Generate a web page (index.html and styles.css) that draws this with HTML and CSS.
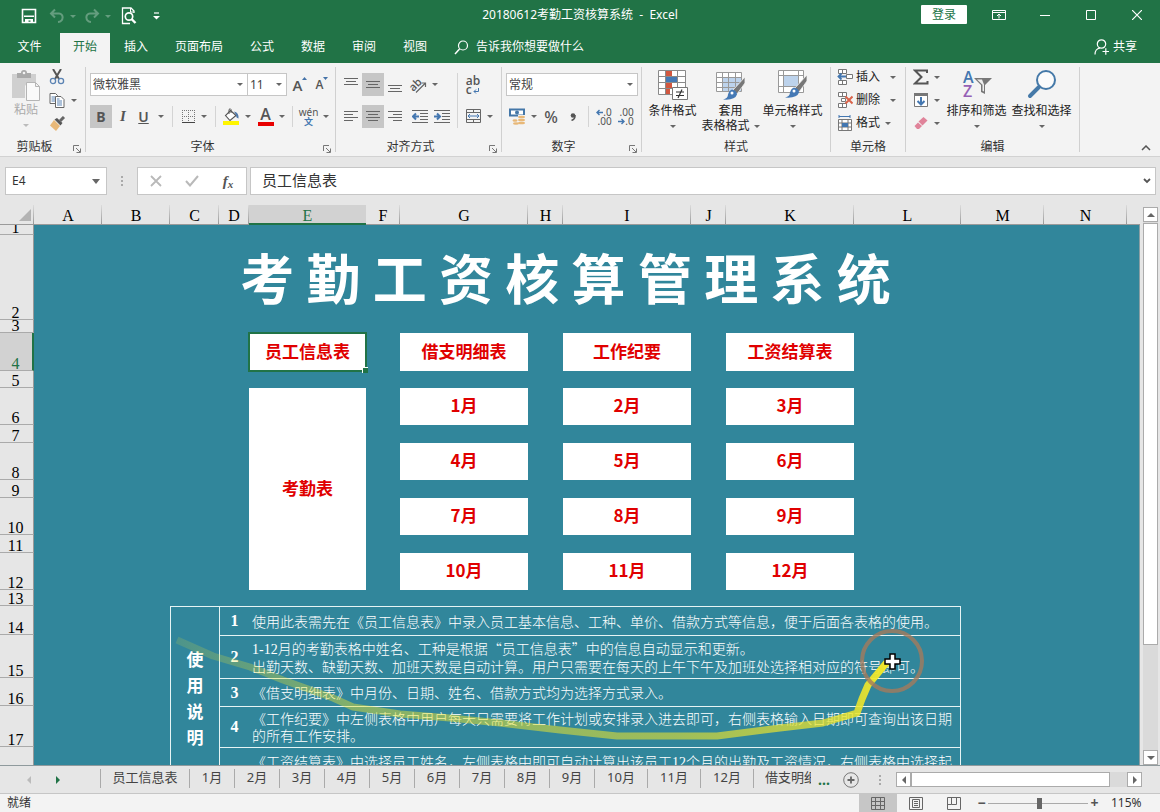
FILE: index.html
```html
<!DOCTYPE html>
<html lang="zh-CN">
<head>
<meta charset="utf-8">
<title>20180612考勤工资核算系统 - Excel</title>
<link rel="stylesheet" href="styles.css">
</head>
<body>
<div class="app">
  <header class="titlebar">
    <div class="quick">
      <button class="qbtn q-save" aria-label="保存"><svg width="16" height="16" viewBox="0 0 16 16"><path d="M1.500 1.500h13v13h-13z" fill="none" stroke="#fff" stroke-width="1.600"/><path d="M3 7.500h10v1.500H3zM4 11h8v4H9.500v-2.500H7.500V15H4z" fill="#fff"/></svg></button>
      <button class="qbtn q-dim" aria-label="撤消"><svg width="16" height="16" viewBox="0 0 16 16"><path d="M6 1.500L2 5.500l4 4M2.500 5.500H10c5 0 5 8-1 8.500" fill="none" stroke="#fff" stroke-width="2"/></svg><i class="caret"></i></button>
      <button class="qbtn q-dim" aria-label="恢复"><svg width="16" height="16" viewBox="0 0 16 16"><path d="M10 1.500l4 4-4 4M13.500 5.500H6c-5 0-5 8 1 8.500" fill="none" stroke="#fff" stroke-width="2"/></svg><i class="caret"></i></button>
      <button class="qbtn q-view" aria-label="打印预览"><svg width="16" height="18" viewBox="0 0 16 18"><path d="M13 6V4L10 1H1.500v15.500H9" fill="none" stroke="#fff" stroke-width="1.300"/><path d="M9.500 1v4H13" fill="none" stroke="#fff"/><circle cx="8" cy="9.500" r="3.700" fill="none" stroke="#fff" stroke-width="1.700"/><path d="M10.500 12l4 4" stroke="#fff" stroke-width="2.400"/></svg></button>
      <button class="qbtn q-more" aria-label="自定义快速访问工具栏"><svg width="7" height="8" viewBox="0 0 7 8"><path d="M1 1h5" stroke="#fff" stroke-width="1.200"/><path d="M0 4h7L3.500 7.500z" fill="#fff"/></svg></button>
    </div>
    <h1 class="doc-title">20180612考勤工资核算系统&nbsp; -&nbsp; Excel</h1>
    <div class="window-tools">
      <button class="login">登录</button>
      <button class="wbtn" aria-label="功能区显示选项"><svg width="14" height="12" viewBox="0 0 14 12"><path d="M.5 1.500h13v9H.500zM.500 3.500h13M7 9.500V5.500M5 7l2-2 2 2" fill="none" stroke="#fff"/></svg></button>
      <button class="wbtn" aria-label="最小化"><svg width="10" height="10" viewBox="0 0 10 10"><path d="M0 5.500h10" stroke="#fff"/></svg></button>
      <button class="wbtn" aria-label="最大化"><svg width="10" height="10" viewBox="0 0 10 10"><path d="M.5.500h9v9h-9z" fill="none" stroke="#fff"/></svg></button>
      <button class="wbtn" aria-label="关闭"><svg width="10" height="10" viewBox="0 0 10 10"><path d="M0 0l10 10M10 0L0 10" stroke="#fff" stroke-width="1.200"/></svg></button>
    </div>
  </header>

  <nav class="tabs">
    <button class="tab file">文件</button>
    <button class="tab active">开始</button>
    <button class="tab">插入</button>
    <button class="tab">页面布局</button>
    <button class="tab">公式</button>
    <button class="tab">数据</button>
    <button class="tab">审阅</button>
    <button class="tab">视图</button>
    <button class="tell"><svg width="15" height="15" viewBox="0 0 15 15"><circle cx="9" cy="5.500" r="4.500" fill="none" stroke="#fff" stroke-width="1.200"/><path d="M5.500 9L1 14" stroke="#fff" stroke-width="1.500"/></svg>告诉我你想要做什么</button>
    <button class="share"><svg width="16" height="16" viewBox="0 0 16 16"><circle cx="7.500" cy="5" r="4.200" fill="none" stroke="#fff" stroke-width="1.200"/><path d="M1 15.500c0-4 2-6 5-6.500M8.500 12.500h6.500M11.800 9.300v6.500" fill="none" stroke="#fff" stroke-width="1.200"/></svg>共享</button>
  </nav>

  <section class="ribbon">
    <div class="group g-clip">
      <div class="body">
        <button class="paste"><svg width="30" height="32" viewBox="0 0 30 32"><path d="M1 4h24v9h-9l-2 3v12H1z" fill="#cfcfcf"/><path d="M6 3h4a3 3 0 0 1 6 0h4v5H6z" fill="#a9a9a9"/><circle cx="13" cy="3" r="1.300" fill="#f3f3f3"/><path d="M15.500 12.500h9l4 4v14h-13zM24.500 12.500v4h4" fill="#fafafa" stroke="#b5b5b5"/></svg>粘贴<i class="caret"></i></button>
        <div class="clip-tools">
          <button class="icon" aria-label="剪切"><svg width="16" height="16" viewBox="0 0 16 16"><path d="M4 0l6 10M12 0L6 10" stroke="#555" stroke-width="2"/><circle cx="4" cy="12" r="2.600" fill="none" stroke="#5b83b3" stroke-width="1.300"/><circle cx="12" cy="12" r="2.600" fill="none" stroke="#5b83b3" stroke-width="1.300"/></svg></button>
          <button class="icon" aria-label="复制"><svg width="16" height="15" viewBox="0 0 16 15"><path d="M1 .500h5.500l2 2v8H1z" fill="#fff" stroke="#666"/><path d="M2.500 4h4M2.500 6h4M2.500 8h4" stroke="#5b83b3"/><path d="M6.500 3.500h5.500l3 3v8H6.500z" fill="#fff" stroke="#666"/><path d="M8 8h5M8 10h5M8 12h5M8 6h2.500" stroke="#5b83b3"/></svg><i class="caret"></i></button>
          <button class="icon" aria-label="格式刷"><svg width="17" height="15" viewBox="0 0 17 15"><path d="M5 4l6 6-4 5L1 9.500z" fill="#e8b878"/><path d="M5.500 3.500L11.500 9.500l2-2.500L8 2z" fill="#555"/><path d="M11 5l4-4" stroke="#666" stroke-width="3"/></svg></button>
        </div>
      </div>
      <div class="label"><span>剪贴板</span><button class="launch" aria-label="剪贴板选项"><svg width="8" height="8" viewBox="0 0 8 8"><path d="M.5 6V.500H6M3 3l4 4M7.500 3.500v4h-4" fill="none" stroke="#777"/></svg></button></div>
    </div>

    <div class="group g-font">
      <div class="body rows">
        <div class="row top">
          <label class="combo fontname"><select aria-label="字体"><option>微软雅黑</option></select><i class="caret"></i></label><label class="combo fontsize"><select aria-label="字号"><option>11</option></select><i class="caret"></i></label>
          <button class="icon grow-a" aria-label="增大字号"><span>A</span><svg width="5" height="3" viewBox="0 0 5 3"><path d="M0 3h5L2.500 0z" fill="#4472a8"/></svg></button>
          <button class="icon shrink-a" aria-label="减小字号"><span>A</span><svg width="5" height="3" viewBox="0 0 5 3"><path d="M0 0h5L2.500 3z" fill="#4472a8"/></svg></button>
        </div>
        <div class="row">
          <button class="icon w22 on fb">B</button><button class="icon w22 fi">I</button><button class="icon w34 fu"><u>U</u><i class="caret"></i></button>
          <span class="sep"></span>
          <button class="icon w34" aria-label="边框"><svg width="14" height="14" viewBox="0 0 14 14"><path d="M.5 0v13M6.500 0v13M12.500 0v13M0 .500h13M0 6.500h13" stroke="#777" stroke-dasharray="1 1"/><path d="M0 12.500h13" stroke="#444"/></svg><i class="caret"></i></button>
          <span class="sep"></span>
          <button class="icon w34" aria-label="填充颜色"><svg width="17" height="17" viewBox="0 0 17 17"><path d="M7.500 2.500l5.500 5-6 5-4.500-5z" fill="#fff" stroke="#555" stroke-width="1.100"/><path d="M6 6V1.500q1.500-1.500 2 0V5" fill="none" stroke="#555"/><path d="M11 3.500q5 1 4.500 7-2.500-.500-2.500-3.500z" fill="#5079ab"/><path d="M0 13h16v4H0z" fill="#fff500"/></svg><i class="caret"></i></button>
          <button class="icon w34" aria-label="字体颜色"><span class="fontcolor">A</span><i class="caret"></i></button>
          <span class="sep"></span>
          <button class="icon w34" aria-label="拼音指南"><span class="pinyin">wén<b>文</b></span><i class="caret"></i></button>
        </div>
      </div>
      <div class="label"><span>字体</span><button class="launch" aria-label="字体选项"><svg width="8" height="8" viewBox="0 0 8 8"><path d="M.5 6V.500H6M3 3l4 4M7.500 3.500v4h-4" fill="none" stroke="#777"/></svg></button></div>
    </div>

    <div class="group g-align">
      <div class="body split">
        <div class="rows">
          <div class="row top">
            <button class="icon w22" aria-label="顶端对齐"><svg width="14" height="14" viewBox="0 0 14 14"><path d="M0 .500h14M2 3.500h10M0 6.500h14" stroke="#666"/></svg></button><button class="icon w22 on" aria-label="垂直居中"><svg width="14" height="14" viewBox="0 0 14 14"><path d="M0 3.500h14M2 6.500h10M0 9.500h14" stroke="#666"/></svg></button><button class="icon w22" aria-label="底端对齐"><svg width="14" height="14" viewBox="0 0 14 14"><path d="M0 7.500h14M2 10.500h10M0 13.500h14" stroke="#666"/></svg></button>
            <button class="icon w34" aria-label="方向"><svg width="18" height="18" viewBox="0 0 18 18"><text x="0" y="12" font-size="11" font-weight="600" font-family="Open Sans" fill="#555" transform="rotate(-45 7 9)">ab</text><path d="M7 16.500l9-9M12.500 7H16.500V11" fill="none" stroke="#666" stroke-width="1.200"/></svg><i class="caret"></i></button>
          </div>
          <div class="row">
            <button class="icon w22" aria-label="左对齐"><svg width="14" height="14" viewBox="0 0 14 14"><path d="M0 1.500h14M0 4.500h9M0 7.500h14M0 10.500h9" stroke="#666"/></svg></button><button class="icon w22 on" aria-label="居中"><svg width="14" height="14" viewBox="0 0 14 14"><path d="M0 1.500h14M2 4.500h10M0 7.500h14M2 10.500h10" stroke="#666"/></svg></button><button class="icon w22" aria-label="右对齐"><svg width="14" height="14" viewBox="0 0 14 14"><path d="M0 1.500h14M5 4.500h9M0 7.500h14M5 10.500h9" stroke="#666"/></svg></button>
            <button class="icon w22 indent" aria-label="减少缩进量"><svg width="16" height="13" viewBox="0 0 16 13"><path d="M0 .500h16M8 3.500h8M8 6.500h8M8 9.500h8M0 12.500h16" stroke="#666"/><path d="M7 6.500H1M4 3.500l-3 3 3 3" fill="none" stroke="#4477b0" stroke-width="2"/></svg></button><button class="icon w22" aria-label="增加缩进量"><svg width="16" height="13" viewBox="0 0 16 13"><path d="M0 .500h16M8 3.500h8M8 6.500h8M8 9.500h8M0 12.500h16" stroke="#666"/><path d="M0 6.500h6M3 3.500l3 3-3 3" fill="none" stroke="#4477b0" stroke-width="2"/></svg></button>
          </div>
        </div>
        <span class="sep tall"></span>
        <div class="rows">
          <div class="row top"><button class="icon w22" aria-label="自动换行"><span class="wrap-ab">ab<br>c<svg width="6" height="6" viewBox="0 0 6 6"><path d="M5.500 0v3.500H1M3 1.500l-2 2 2 2" fill="none" stroke="#4477b0"/></svg></span></button></div>
          <div class="row"><button class="icon w34" aria-label="合并后居中"><svg width="16" height="15" viewBox="0 0 16 15"><path d="M.5.500h14v13H.500zM.500 3.500h14M.500 10.500h14M7.500.500v3M7.500 10.500v3" fill="none" stroke="#666"/><path d="M2 7h11M4 5L2 7l2 2M11 5l2 2-2 2" fill="none" stroke="#4477b0"/></svg><i class="caret"></i></button></div>
        </div>
      </div>
      <div class="label"><span>对齐方式</span><button class="launch" aria-label="对齐选项"><svg width="8" height="8" viewBox="0 0 8 8"><path d="M.5 6V.500H6M3 3l4 4M7.500 3.500v4h-4" fill="none" stroke="#777"/></svg></button></div>
    </div>

    <div class="group g-num">
      <div class="body rows">
        <div class="row top"><label class="combo numfmt"><select aria-label="数字格式"><option>常规</option></select><i class="caret"></i></label></div>
        <div class="row">
          <button class="icon w34" aria-label="会计数字格式"><svg width="17" height="17" viewBox="0 0 17 17"><path d="M1 1.500h14v6H1z" fill="#fff" stroke="#4477a8" stroke-width="2"/><circle cx="8" cy="4.500" r="2" fill="#4477a8"/><path d="M9 7h8v10H4v-6h5z" fill="#f3f3f3"/><ellipse cx="12.500" cy="9" rx="3.500" ry="1.300" fill="#e8b878"/><ellipse cx="12.500" cy="12" rx="3.500" ry="1.300" fill="#e8b878"/><ellipse cx="12.500" cy="15" rx="3.500" ry="1.300" fill="#e8b878"/><ellipse cx="6" cy="12.500" rx="2.500" ry="1.200" fill="#e8b878"/><ellipse cx="7" cy="15.500" rx="3" ry="1.200" fill="#e8b878"/></svg><i class="caret"></i></button>
          <button class="icon w22 pct">%</button><button class="icon w22" aria-label="千位分隔"><svg width="6" height="8" viewBox="0 0 6 8"><circle cx="3" cy="2.500" r="2.300" fill="#555"/><path d="M5 2q.500 4-3.500 5.500" fill="none" stroke="#555" stroke-width="1.400"/></svg></button>
          <span class="sep"></span>
          <button class="icon w22 dec"><span><svg width="7" height="7" viewBox="0 0 7 7"><path d="M7 3.500H1M3.500 1L1 3.500 3.500 6" fill="none" stroke="#4477b0" stroke-width="1.400"/></svg>.0<br>.00</span></button><button class="icon w22 dec"><span>.00<br><svg width="7" height="7" viewBox="0 0 7 7"><path d="M0 3.500h6M3.500 1L6 3.500 3.500 6" fill="none" stroke="#4477b0" stroke-width="1.400"/></svg>.0</span></button>
        </div>
      </div>
      <div class="label"><span>数字</span><button class="launch" aria-label="数字选项"><svg width="8" height="8" viewBox="0 0 8 8"><path d="M.5 6V.500H6M3 3l4 4M7.500 3.500v4h-4" fill="none" stroke="#777"/></svg></button></div>
    </div>

    <div class="group g-style">
      <div class="body">
        <button class="big"><svg width="32" height="32" viewBox="0 0 32 32"><path d="M1.500 1.500h27v24h-27z" fill="#fff"/><path d="M9 1h6v6H9zM9 13h6v6H9zM9 19h4v6H9z" fill="#d2573f"/><path d="M9 7h11v6H9z" fill="#4579b5"/><path d="M1.500 1.500h27v24h-27zM1.500 7.500h27M1.500 13.500h27M1.500 19.500h27M8.500 1.500v24M20.500 1.500v24" fill="none" stroke="#8a8a8a"/><path d="M15.500 18.500h15v12h-15z" fill="#fff" stroke="#777"/><path d="M19 23h8M19 26.500h8M25 20.500l-4 8.500" stroke="#333" stroke-width="1.200"/></svg><span>条件格式</span><i class="caret"></i></button>
        <button class="big mid"><svg width="32" height="32" viewBox="0 0 32 32"><path d="M1.500 3.500h25v19h-25z" fill="#fff"/><path d="M8 9h18v14H8z" fill="#bdd3ec"/><path d="M1.500 3.500h25v19h-25zM1.500 8.500h25M1.500 13.500h25M1.500 18.500h25M7.500 3.500v19M13.500 3.500v19M20.500 3.500v19" fill="none" stroke="#999"/><path d="M30 8L18 21l4 4 8-11z" fill="#777" stroke="#f3f3f3" stroke-width=".800"/><path d="M17 20.500q5 1 5 5-2 6-14 5 5-1 5-5 1-4 4-5z" fill="#4579b5"/><circle cx="17" cy="24" r="1.500" fill="#fff"/></svg><span>套用</span><span class="line2">表格格式<i class="caret"></i></span></button>
        <button class="big wide"><svg width="32" height="32" viewBox="0 0 32 32"><path d="M1.500 1.500h25v22h-25z" fill="#fff"/><path d="M7 7h14v10H7z" fill="#bdd3ec"/><path d="M1.500 1.500h25v22h-25zM1.500 6.500h25M1.500 17.500h25M6.500 1.500v22M21.500 1.500v22" fill="none" stroke="#999"/><path d="M30 6L18 19l4 4 8-11z" fill="#777" stroke="#f3f3f3" stroke-width=".800"/><path d="M17 18.500q5 1 5 5-2 6-14 5 5-1 5-5 1-4 4-5z" fill="#4579b5"/><circle cx="17" cy="22" r="1.500" fill="#fff"/></svg><span>单元格样式</span><i class="caret"></i></button>
      </div>
      <div class="label"><span>样式</span></div>
    </div>

    <div class="group g-cells">
      <div class="body list">
        <button class="line"><svg width="16" height="16" viewBox="0 0 16 16"><path d="M1.500.500h8v4h-8zM5.500.500v4M1.500 11.500h8v4h-8zM5.500 11.500v4M9.500 5.500h6v4h-6z" fill="#fff" stroke="#777"/><path d="M9 7.500H1M4.500 4.500l-3 3 3 3" fill="none" stroke="#4477b0" stroke-width="1.800"/></svg><span>插入</span><i class="caret far"></i></button>
        <button class="line"><svg width="16" height="16" viewBox="0 0 16 16"><path d="M1.500.500h8v4h-8zM5.500.500v4M1.500 11.500h8v4h-8zM5.500 11.500v4M4.500 6.500h4v3h-4z" fill="#fff" stroke="#777"/><path d="M8.500 4.500l7 7M15.500 4.500l-7 7" stroke="#d9634a" stroke-width="2"/></svg><span>删除</span><i class="caret far"></i></button>
        <button class="line"><svg width="16" height="16" viewBox="0 0 16 16"><path d="M2 1.500h11M2 0v3M13 0v3" stroke="#4477b0"/><path d="M1.500 4.500h13v11h-13zM1.500 8h13M1.500 12h13M5 4.500v11M11 4.500v11" fill="#fff" stroke="#777"/><path d="M5 8h6v4H5z" fill="#4477b0"/></svg><span>格式</span><i class="caret"></i></button>
      </div>
      <div class="label"><span>单元格</span></div>
    </div>

    <div class="group g-edit">
      <div class="body">
        <div class="list">
          <button class="line" aria-label="自动求和"><svg width="16" height="16" viewBox="0 0 16 16"><path d="M14 4V1.500H2L8.500 8 2 14.500h12.500V12" fill="none" stroke="#555" stroke-width="2"/></svg><i class="caret"></i></button>
          <button class="line" aria-label="填充"><svg width="16" height="16" viewBox="0 0 16 16"><path d="M1.500 1.500h13v13h-13z" fill="#fff" stroke="#777"/><path d="M1 1h14v3H1z" fill="#777"/><path d="M8 5v7M4.500 9L8 12.500 11.500 9" fill="none" stroke="#4477b0" stroke-width="2"/></svg><i class="caret"></i></button>
          <button class="line" aria-label="清除"><svg width="16" height="16" viewBox="0 0 16 16"><path d="M10.500 2l4 3.500-5 5-4-4z" fill="#e0839a"/><path d="M5 7.500l4 3.500-3 3H4l-2.500-3z" fill="#e0839a"/></svg><i class="caret"></i></button>
        </div>
        <button class="big wide sort"><svg width="32" height="32" viewBox="0 0 32 32"><text x="2" y="14" font-size="16" font-weight="600" font-family="Open Sans" fill="#4477b0">A</text><text x="2" y="28" font-size="16" font-weight="600" font-family="Open Sans" fill="#9560b5">Z</text><path d="M13 9h18l-7 7v9l-4-2v-7z" fill="#777"/><path d="M16 10.500h5l2 5v7l-1.500-.700v-6z" fill="#eee"/></svg><span>排序和筛选</span><i class="caret"></i></button>
        <button class="big wide"><svg width="32" height="32" viewBox="0 0 32 32"><circle cx="20" cy="11" r="9" fill="#fbfbfb" stroke="#4579a8" stroke-width="2"/><path d="M13 18L4 27" stroke="#4579a8" stroke-width="4" stroke-linecap="round"/></svg><span>查找和选择</span><i class="caret"></i></button>
      </div>
      <div class="label"><span>编辑</span></div>
    </div>
    <button class="collapse" aria-label="折叠功能区"><svg width="10" height="6" viewBox="0 0 10 6"><path d="M1 5l4-4 4 4" fill="none" stroke="#555" stroke-width="1.500"/></svg></button>
  </section>

  <section class="formula">
    <div class="namebox"><input type="text" value="E4" aria-label="名称框"><button aria-label="名称列表"><i class="caret big-caret"></i></button></div>
    <span class="dots"></span>
    <div class="fx">
      <button aria-label="取消"><svg width="12" height="12" viewBox="0 0 12 12"><path d="M1 1l10 10M11 1L1 11" stroke="#b9b9b9" stroke-width="1.800"/></svg></button>
      <button aria-label="输入"><svg width="14" height="12" viewBox="0 0 14 12"><path d="M1 6l4 4.500L13 1" fill="none" stroke="#b9b9b9" stroke-width="2"/></svg></button>
      <button class="fx-btn">f<sub>x</sub></button>
    </div>
    <div class="fbar"><input type="text" value="员工信息表" aria-label="编辑栏"><button aria-label="展开编辑栏"><svg width="8" height="6" viewBox="0 0 8 6"><path d="M1 1l3 3 3-3" fill="none" stroke="#555" stroke-width="1.800"/></svg></button></div>
  </section>

  <main class="work">
    <div class="sheet">
      <table class="grid">
        <colgroup><col class="c-head"><col class="c-a"><col class="c-a"><col class="c-c"><col class="c-d"><col class="c-e"><col class="c-gap"><col class="c-g"><col class="c-gap2"><col class="c-g"><col class="c-gap2"><col class="c-g"><col class="c-l"><col class="c-m"><col class="c-m"><col></colgroup>
        <thead><tr><th class="corner"><svg width="12" height="12" viewBox="0 0 12 12"><path d="M12 0v12H0z" fill="#b3b3b3"/></svg></th><th>A</th><th>B</th><th>C</th><th>D</th><th class="sel">E</th><th>F</th><th>G</th><th>H</th><th>I</th><th>J</th><th>K</th><th>L</th><th>M</th><th>N</th><th class="last"></th></tr></thead>
        <tbody>
          <tr class="r1"><th><span class="cut">1</span></th><td colspan="15"></td></tr>
          <tr class="r2"><th>2</th><td colspan="2"></td><td colspan="10" class="title">考 勤 工 资 核 算 管 理 系 统</td><td colspan="3"></td></tr>
          <tr class="r3"><th>3</th><td colspan="15"></td></tr>
          <tr class="r4"><th class="sel">4</th><td colspan="4"></td><td class="box current"><a href="#info">员工信息表</a><i class="handle"></i></td><td></td><td class="box"><a href="#loan">借支明细表</a></td><td></td><td class="box"><a href="#memo">工作纪要</a></td><td></td><td class="box"><a href="#pay">工资结算表</a></td><td colspan="4"></td></tr>
          <tr class="gap"><th>5</th><td colspan="15"></td></tr>
          <tr class="rb"><th>6</th><td colspan="4"></td><td rowspan="7" class="box"><a href="#attend">考勤表</a></td><td></td><td class="box"><a href="#m1">1月</a></td><td></td><td class="box"><a href="#m2">2月</a></td><td></td><td class="box"><a href="#m3">3月</a></td><td colspan="4"></td></tr>
          <tr class="gap g2"><th>7</th><td colspan="4"></td><td colspan="10"></td></tr>
          <tr class="rb"><th>8</th><td colspan="4"></td><td></td><td class="box"><a href="#m4">4月</a></td><td></td><td class="box"><a href="#m5">5月</a></td><td></td><td class="box"><a href="#m6">6月</a></td><td colspan="4"></td></tr>
          <tr class="gap g2"><th>9</th><td colspan="4"></td><td colspan="10"></td></tr>
          <tr class="rb"><th>10</th><td colspan="4"></td><td></td><td class="box"><a href="#m7">7月</a></td><td></td><td class="box"><a href="#m8">8月</a></td><td></td><td class="box"><a href="#m9">9月</a></td><td colspan="4"></td></tr>
          <tr class="gap g2"><th>11</th><td colspan="4"></td><td colspan="10"></td></tr>
          <tr class="rb"><th>12</th><td colspan="4"></td><td></td><td class="box"><a href="#m10">10月</a></td><td></td><td class="box"><a href="#m11">11月</a></td><td></td><td class="box"><a href="#m12">12月</a></td><td colspan="4"></td></tr>
          <tr class="r13"><th>13</th><td colspan="15"></td></tr>
          <tr class="r14"><th>14</th><td colspan="2"></td><td rowspan="5" class="guide">使<br>用<br>说<br>明</td><td class="no">1</td><td colspan="8" class="note">使用此表需先在《员工信息表》中录入员工基本信息、工种、单价、借款方式等信息，便于后面各表格的使用。</td><td colspan="3"></td></tr>
          <tr class="r15"><th>15</th><td colspan="2"></td><td class="no">2</td><td colspan="8" class="note"><span class="num">1-12</span>月的考勤表格中姓名、工种是根据“员工信息表”中的信息自动显示和更新。<br>出勤天数、缺勤天数、加班天数是自动计算。用户只需要在每天的上午下午及加班处选择相对应的符号即可。</td><td colspan="3"></td></tr>
          <tr class="r16"><th>16</th><td colspan="2"></td><td class="no">3</td><td colspan="8" class="note">《借支明细表》中月份、日期、姓名、借款方式均为选择方式录入。</td><td colspan="3"></td></tr>
          <tr class="r17"><th>17</th><td colspan="2"></td><td class="no">4</td><td colspan="8" class="note">《工作纪要》中左侧表格中用户每天只需要将工作计划或安排录入进去即可，右侧表格输入日期即可查询出该日期的所有工作安排。</td><td colspan="3"></td></tr>
          <tr class="r18"><th></th><td colspan="2"></td><td class="no"></td><td colspan="8" class="note first">《工资结算表》中选择员工姓名，左侧表格中即可自动计算出该员工<span class="num">12</span>个月的出勤及工资情况，右侧表格中选择起</td><td colspan="3"></td></tr>
        </tbody>
      </table>
      <svg class="trail" width="960" height="561" viewBox="0 0 960 561" aria-hidden="true">
        <defs><linearGradient id="fade" gradientUnits="userSpaceOnUse" x1="175" y1="0" x2="890" y2="0"><stop offset="0" stop-color="#e9e32e" stop-opacity=".15"/><stop offset=".25" stop-color="#e9e32e" stop-opacity=".45"/><stop offset=".7" stop-color="#e9e32e" stop-opacity=".6"/><stop offset=".92" stop-color="#ece42c" stop-opacity=".75"/><stop offset="1" stop-color="#f4ea28" stop-opacity="1"/></linearGradient></defs>
        <path d="M177 435L213 451 250 462 283 475 333 493 353 502 400 509 450 513 500 518 560 525 617 531 717 531 780 523 823 518 857 508 862 494 868 480 888 456" fill="none" stroke="url(#fade)" stroke-width="7" stroke-linejoin="round"/>
        <circle cx="892" cy="456" r="30" fill="none" stroke="#a47a5d" stroke-opacity=".8" stroke-width="4"/>
        <path d="M890 449h5v5h5v5h-5v5h-5v-5h-5v-5h5z" fill="#fff" stroke="#000" stroke-width="1.500"/>
      </svg>
    </div>
    <div class="vscroll"><button aria-label="向上滚动"><i class="tri up"></i></button><div class="vtrack"><div class="vthumb"></div></div><button aria-label="向下滚动"><i class="tri down"></i></button></div>
  </main>

  <nav class="sheets">
    <div class="nav"><button aria-label="前一张"><i class="tri left dim"></i></button><button aria-label="后一张"><i class="tri right green"></i></button></div>
    <div class="stabs"><button class="info">员工信息表</button><button>1月</button><button>2月</button><button>3月</button><button>4月</button><button>5月</button><button>6月</button><button>7月</button><button>8月</button><button>9月</button><button class="two">10月</button><button class="two">11月</button><button class="two">12月</button><button class="clipped"><span>借支明细表</span></button></div>
    <span class="more">...</span>
    <button class="add" aria-label="新工作表"><svg width="16" height="16" viewBox="0 0 16 16"><circle cx="8" cy="8" r="7.300" fill="none" stroke="#777"/><path d="M4.500 8h7M8 4.500v7" stroke="#666" stroke-width="1.800"/></svg></button>
    <span class="dots"></span>
    <div class="hscroll"><button aria-label="向左滚动"><i class="tri left"></i></button><div class="htrack"><div class="hthumb"></div></div><button aria-label="向右滚动"><i class="tri right"></i></button></div>
  </nav>

  <footer class="status">
    <span class="ready">就绪</span>
    <div class="views">
      <button class="on" aria-label="普通"><svg width="14" height="13" viewBox="0 0 14 13"><path d="M.5.500h13v12H.500zM.500 4.500h13M.500 8.500h13M4.500.500v12M9.500.500v12" fill="none" stroke="#666"/></svg></button>
      <button aria-label="页面布局视图"><svg width="14" height="13" viewBox="0 0 14 13"><path d="M.5.500h13v12H.500zM3.500 2.500h7v8h-7zM5 4.500h4M5 6.500h4M5 8.500h4" fill="none" stroke="#666"/></svg></button>
      <button aria-label="分页预览"><svg width="14" height="13" viewBox="0 0 14 13"><path d="M.5.500h13v12H.500zM4.500.500v7h5v-7M.500 7.500h4" fill="none" stroke="#666"/></svg></button>
    </div>
    <div class="zoom"><button>−</button><input type="range" min="0" max="100" value="52" aria-label="缩放"><button>+</button></div>
    <span class="pc">115%</span>
  </footer>
</div>
</body>
</html>
```
FILE: styles.css
```css
* { box-sizing: border-box; }
body { margin: 0; }
button, input, select { font: inherit; color: inherit; margin: 0; padding: 0; border: 0; background: none; border-radius: 0; }
svg { display: block; flex: none; }
i { font-style: normal; }
.app { display: flex; flex-direction: column; height: 100vh; overflow: hidden; background: #e6e6e6; color: #333; font: 12px/16px "Noto Sans", "Noto Sans CJK SC", sans-serif; }
.caret { flex: none; width: 0; height: 0; border: 3px solid transparent; border-top-color: #666; border-bottom-width: 0; }
.big-caret { border-width: 5px 4px 0; }

/* title bar */
.titlebar { display: grid; grid-template-columns: 1fr auto 1fr; height: 32px; background: #217346; color: #fff; align-items: center; }
.quick { display: flex; align-items: center; padding-left: 21px; }
.qbtn { display: flex; align-items: center; gap: 5px; }
.q-save { margin-right: 12px; }
.q-dim { opacity: .3; margin-right: 8px; }
.q-dim .caret { border-top-color: #fff; }
.q-view { margin-left: 2px; }
.q-more { margin-left: 16px; }
.doc-title { margin: 0; padding-bottom: 2px; font-size: 12px; font-weight: 400; }
.window-tools { display: flex; justify-content: flex-end; align-items: center; padding-bottom: 3px; }
.login { width: 46px; height: 19px; margin-right: 9px; background: #fff; color: #217346; border-radius: 1px; line-height: 18px; }
.wbtn { width: 46px; height: 28px; display: flex; align-items: center; justify-content: center; }

/* ribbon tabs */
.tabs { display: flex; gap: 1px; height: 31px; padding-top: 1px; background: #217346; color: #fff; }
.tab { padding: 0 13px 3px; }
.tab.file { width: 59px; }
.tab.active { background: #f3f3f3; color: #217346; }
.tell { display: flex; align-items: center; gap: 7px; padding: 0 13px 2px; }
.share { display: flex; align-items: center; gap: 3px; margin-left: auto; padding: 0 23px 2px 0; }

/* ribbon */
.ribbon { display: flex; flex: none; height: 94px; background: #f3f3f3; border-bottom: 1px solid #d2d2d2; padding: 4px 0; }
.group { flex: none; display: flex; flex-direction: column; border-right: 1px solid #d0d0d0; }
.body { display: flex; flex: 1; min-height: 0; }
.label { display: flex; align-items: center; height: 17px; margin-bottom: -4px; margin-top: 2px; padding-bottom: 1px; }
.label span { flex: 1; text-align: center; }
.launch { flex: none; width: 16px; height: 12px; display: flex; justify-content: center; align-items: flex-end; }
.g-clip { width: 86px; }
.g-font { width: 250px; }
.g-align { width: 166px; }
.g-num { width: 140px; }
.g-style { width: 189px; }
.g-cells { width: 75px; }
.g-edit { width: 174px; }
.paste { width: 52px; display: flex; flex-direction: column; align-items: center; color: #aaa; padding-top: 3px; }
.paste .caret { border-top-color: #bbb; margin-top: 6px; }
.clip-tools { display: flex; flex-direction: column; gap: 7px; padding-top: 2px; }
.clip-tools .icon { justify-content: flex-start; gap: 6px; height: 16px; margin-left: -3px; }
.rows { display: flex; flex-direction: column; gap: 9px; padding: 6px 0 0 4px; }
.row { display: flex; align-items: center; height: 23px; }
.icon { display: flex; align-items: center; justify-content: center; gap: 5px; height: 23px; color: #555; }
.w22 { width: 22px; }
.w34 { width: 34px; }
.on { background: #c6c6c6; }
.sep { width: 1px; height: 21px; margin: 0 4px; background: #d4d4d4; flex: none; }
.sep.tall { height: 55px; margin: 6px 4px 0; }
.combo { display: grid; align-items: center; height: 23px; background: #fff; border: 1px solid #c6c6c6; }
.combo select { grid-area: 1 / 1; appearance: none; width: 100%; height: 21px; padding-left: 2px; outline: 0; color: #444; }
.combo .caret { grid-area: 1 / 1; justify-self: end; margin-right: 4px; pointer-events: none; }
.fontname { width: 158px; margin-right: -1px; }
.fontsize { width: 40px; }
.numfmt { width: 132px; }
.grow-a, .shrink-a { gap: 0; width: 22px; align-items: flex-start; }
.grow-a { margin-left: 2px; }
.grow-a span, .shrink-a span { font: 600 15px/24px "Open Sans", sans-serif; }
.shrink-a span { font-size: 12px; }
.grow-a svg, .shrink-a svg { margin-top: 4px; }
.fb { font-weight: 700; font-size: 14px; }
.fi { font: italic 700 15px "Liberation Serif", serif; }
.fu { font-weight: 600; font-size: 14px; gap: 9px; }
.fontcolor { font: 600 16px/15px "Open Sans", sans-serif; width: 16px; text-align: center; border-bottom: 4px solid #e80000; }
.pinyin { font-size: 10px; line-height: 9px; text-align: center; }
.pinyin b { display: block; color: #4477b0; font-size: 9px; line-height: 9px; }
.indent { margin-left: 3px; }
.g-align .body > .rows:first-child { width: 117px; }
.wrap-ab { font: 600 12px/9px "Open Sans", sans-serif; text-align: left; }
.wrap-ab svg { display: inline; margin-left: 1px; }
.g-align .rows + .sep + .rows { padding-left: 0; }
.g-align .w22 { flex: none; }
.pct { font-size: 16px; font-weight: 500; }
.dec { font-size: 10px; line-height: 9px; text-align: right; }
.dec svg { display: inline; }
.g-style .body { padding-left: 2px; }
.big { display: flex; flex-direction: column; align-items: center; width: 57px; padding-top: 2px; color: #222; white-space: nowrap; }
.big.wide { width: 65px; }
.big.mid { width: 59px; }
.big .caret { margin-top: 6px; }
.big span { margin-top: 1px; line-height: 17px; }
.big .line2 { display: flex; align-items: center; gap: 4px; line-height: 14px; margin: 0 -10px; }
.big .line2 .caret { margin: 0; }
.list { display: flex; flex-direction: column; gap: 7px; padding: 2px 0 0 6px; }
.line { display: flex; align-items: center; gap: 3px; height: 16px; color: #222; }
.line .caret { margin-left: 2px; }
.line .caret.far { margin-left: 7px; }
.g-edit .list { padding-left: 7px; }
.sort { margin-left: 4px; }
.collapse { margin-left: auto; padding: 0 9px 1px; align-self: flex-end; }

/* formula bar */
.formula { display: flex; flex: none; height: 48px; padding: 10px 4px 10px 5px; align-items: stretch; }
.namebox { display: flex; width: 102px; background: #fff; border: 1px solid #c6c6c6; }
.namebox input { flex: 1; min-width: 0; padding-left: 6px; }
.namebox button { width: 20px; display: flex; align-items: center; justify-content: center; }
.dots { width: 2px; height: 10px; margin: 0 14px; align-self: center; background: repeating-linear-gradient(#aaa 0 2px, transparent 2px 4px); }
.fx { display: flex; width: 110px; margin-right: 3px; background: #fff; border: 1px solid #c6c6c6; }
.fx button { flex: 1; display: flex; align-items: center; justify-content: center; }
.fx .fx-btn { font: italic 700 15px/20px "Liberation Serif", serif; color: #555; }
.fx-btn sub { font-size: 11px; margin-top: 5px; line-height: 10px; }
.fbar { flex: 1; display: flex; background: #fff; border: 1px solid #c6c6c6; }
.fbar input { flex: 1; font-size: 15px; padding: 0 0 3px 11px; min-width: 0; }
.fbar button { width: 16px; display: flex; align-items: center; justify-content: center; }

/* worksheet */
.work { flex: 1; min-height: 0; display: flex; border-bottom: 1px solid #8f9a9d; }
.sheet { position: relative; flex: 1; min-width: 0; overflow: hidden; }
.grid { width: 100%; table-layout: fixed; border-collapse: separate; border-spacing: 0; }
.c-head { width: 34px; }
.c-a { width: 68px; }
.c-c { width: 49px; }
.c-d { width: 30px; }
.c-e { width: 117px; }
.c-gap { width: 34px; }
.c-gap2 { width: 35px; }
.c-g { width: 128px; }
.c-l { width: 107px; }
.c-m { width: 83px; }
.grid th, .grid td { padding: 0; }
.grid th { font: 400 16px/13px "Liberation Serif", serif; color: #000; background: #e6e6e6; vertical-align: bottom; text-align: center; }
.grid thead th { height: 20px; line-height: 16px; border-bottom: 1px solid #9a9a9a; background: linear-gradient(#dcdcdc, #999) right / 1px 100% no-repeat #e6e6e6; }
.grid thead th.sel { background: #d2d2d2; color: #217346; border-bottom: 2px solid #217346; line-height: 15px; }
.grid thead th.corner { padding: 0 3px 3px; }
.grid thead th.last { background: #e6e6e6; }
.corner svg { margin-left: auto; }
.grid tbody th { border-right: 1px solid #999; border-bottom: 1px solid #aaa; padding-right: 2px; }
.grid tbody th.sel { background: #d2d2d2; color: #217346; border-right: 2px solid #217346; padding-right: 1px; }
.cut { display: flex; justify-content: center; align-items: flex-end; height: 9px; overflow: hidden; }
.grid td { background: #31869b; }
.grid td:last-child { border-right: 1px solid #8a9ea3; }
.r1 { height: 10px; }
.r2 { height: 85px; }
.r3 { height: 13px; }
.grid .r3 th { line-height: 12px; }
.r4 { height: 38px; }
.gap { height: 17px; }
.g2 { height: 18px; }
.rb { height: 37px; }
.r13 { height: 16px; }
.r14 { height: 29px; }
.r15 { height: 43px; }
.r16 { height: 28px; }
.r17 { height: 41px; }
.r18 { height: 44px; }
.grid .title { color: #fff; font: 700 54px/60px "Noto Sans CJK SC", sans-serif; text-align: center; white-space: nowrap; padding-bottom: 2px; }
.grid .box { background: #fff; text-align: center; position: relative; padding-bottom: 2px; }
.box a { color: #e00000; text-decoration: none; font: 700 17px/20px "Noto Sans CJK SC", sans-serif; white-space: nowrap; }
.grid .current { outline: 2px solid #217346; outline-offset: -1px; }
.handle { position: absolute; right: -2px; bottom: -2px; width: 6px; height: 6px; background: #217346; border: 1px solid #fff; border-width: 1px 0 0 1px; }
.grid .guide { color: #fff; font: 700 17px/26px "Noto Sans CJK SC", sans-serif; text-align: center; border: 1px solid #e6f4f4; border-right: 0; padding-bottom: 2px; }
.grid .no { color: #fff; font: 700 16px/18px "Liberation Serif", serif; text-align: center; border: 1px solid #e6f4f4; border-width: 1px 0 0 1px; }
.grid .note { color: #fff; font: 300 14px/17px "Noto Sans CJK SC", sans-serif; padding: 0 3px; border: 1px solid #e6f4f4; border-width: 1px 1px 0 0; }
.grid .note.first { vertical-align: top; padding-top: 5px; }
.num { font-family: "Liberation Serif", serif; }
.trail { position: absolute; left: 0; top: 0; pointer-events: none; }

/* scroll bars */
.vscroll { display: flex; flex-direction: column; flex: none; width: 15px; margin: 2px 2px 0 3px; }
.vscroll button, .hscroll button { flex: none; width: 15px; height: 15px; background: #fff; border: 1px solid #ababab; display: flex; align-items: center; justify-content: center; }
.vtrack { flex: 1; background: #dadada; padding-top: 1px; }
.vthumb { height: 80%; background: #fff; border: 1px solid #ababab; }
.tri { display: block; width: 0; height: 0; border: 4px solid transparent; }
.tri.up { border-bottom-color: #666; border-top: 0; }
.tri.down { border-top-color: #666; border-bottom: 0; }
.tri.left { border-right-color: #666; border-left: 0; }
.tri.right { border-left-color: #666; border-right: 0; }
.tri.dim { border-right-color: #bbb; }
.tri.green { border-left-color: #217346; }

/* sheet tabs */
.sheets { display: flex; flex: none; height: 28px; align-items: center; border-bottom: 1px solid #c6c6c6; color: #444; }
.nav { display: flex; gap: 25px; width: 100px; padding-left: 27px; }
.stabs { display: flex; flex: none; height: 19px; margin-bottom: 2px; font-size: 13px; line-height: 15px; }
.stabs button { width: 45px; padding-bottom: 3px; border-left: 1px solid #aaa; white-space: nowrap; }
.stabs .info { width: 89px; }
.stabs .two { width: 53px; }
.stabs .clipped { width: 58px; padding-left: 11px; }
.clipped span { display: block; width: 46px; overflow: hidden; text-align: left; }
.more { width: 26px; text-align: center; color: #217346; font-weight: 700; font-size: 14px; }
.add { margin-left: 6px; }
.sheets .dots { margin: 0 15px 0 20px; }
.hscroll { display: flex; flex: 1; margin-right: 18px; }
.htrack { flex: 1; background: #dadada; }
.hthumb { width: 92%; height: 15px; background: #fff; border: 1px solid #ababab; }

/* status bar */
.status { display: flex; flex: none; height: 18px; align-items: center; background: #f3f3f3; }
.ready { padding-left: 7px; }
.views { display: flex; margin-left: auto; height: 18px; }
.views button { width: 38px; display: flex; align-items: center; justify-content: center; }
.zoom { display: flex; align-items: center; padding-left: 2px; }
.zoom button { width: 13px; font-weight: 700; font-size: 14px; line-height: 16px; color: #555; }
.zoom input { appearance: none; width: 100px; height: 12px; background: linear-gradient(#aaa, #aaa) center / 100% 1px no-repeat; }
.zoom input::-webkit-slider-thumb { appearance: none; width: 5px; height: 11px; background: #666; }
.pc { width: 59px; padding-left: 10px; }
```
